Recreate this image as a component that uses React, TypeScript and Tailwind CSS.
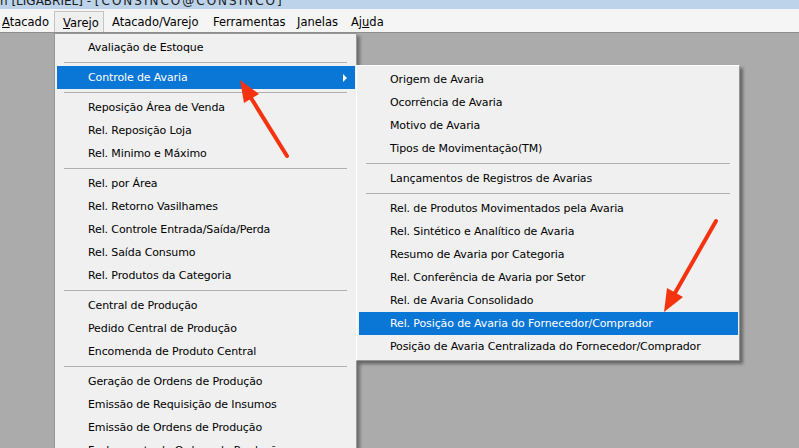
import React from "react";

type Item = { label: string; active?: boolean; sub?: boolean } | "-";

const VAREJO: Item[] = [
  { label: "Avaliação de Estoque" },
  "-",
  { label: "Controle de Avaria", active: true, sub: true },
  "-",
  { label: "Reposição Área de Venda" },
  { label: "Rel. Reposição Loja" },
  { label: "Rel. Minimo e Máximo" },
  "-",
  { label: "Rel. por Área" },
  { label: "Rel. Retorno Vasilhames" },
  { label: "Rel. Controle Entrada/Saída/Perda" },
  { label: "Rel. Saída Consumo" },
  { label: "Rel. Produtos da Categoria" },
  "-",
  { label: "Central de Produção" },
  { label: "Pedido Central de Produção" },
  { label: "Encomenda de Produto Central" },
  "-",
  { label: "Geração de Ordens de Produção" },
  { label: "Emissão de Requisição de Insumos" },
  { label: "Emissão de Ordens de Produção" },
  { label: "Fechamento de Ordens de Produção" },
];

const AVARIA: Item[] = [
  { label: "Origem de Avaria" },
  { label: "Ocorrência de Avaria" },
  { label: "Motivo de Avaria" },
  { label: "Tipos de Movimentação(TM)" },
  "-",
  { label: "Lançamentos de Registros de Avarias" },
  "-",
  { label: "Rel. de Produtos Movimentados pela Avaria" },
  { label: "Rel. Sintético e Analítico de Avaria" },
  { label: "Resumo de Avaria por Categoria" },
  { label: "Rel. Conferência de Avaria por Setor" },
  { label: "Rel. de Avaria Consolidado" },
  { label: "Rel. Posição de Avaria do Fornecedor/Comprador", active: true },
  { label: "Posição de Avaria Centralizada do Fornecedor/Comprador" },
];

const MenuList = ({ items }: { items: Item[] }) => (
  <div className="flex flex-col">
    {items.map((it, i) =>
      it === "-" ? (
        <div key={i} className="h-[7px] flex flex-col justify-center ml-[7px] mr-[8px]">
          <div className="h-px bg-[#b0b0b0]" />
        </div>
      ) : (
        <div
          key={i}
          className={`h-[23px] flex items-center pt-px pl-[31px] pr-2 whitespace-nowrap relative tracking-[-0.12px] ${
            it.active ? "bg-[#0a76d6] text-white" : "text-black"
          }`}
        >
          {it.label}
          {it.sub && (
            <span className="absolute right-[8px] top-[8px] w-0 h-0 border-y-[4px] border-y-transparent border-l-[4px] border-l-white" />
          )}
        </div>
      )
    )}
  </div>
);

const MENUBAR = [
  { label: "Atacado", u: 0, w: "w-[60px]" },
  { label: "Varejo", u: 0, w: "w-[50px]", open: true },
  { label: "Atacado/Varejo", u: -1, w: "w-[101px]" },
  { label: "Ferramentas", u: -1, w: "w-[84px]" },
  { label: "Janelas", u: 0, w: "w-[54px]" },
  { label: "Ajuda", u: 2, w: "w-[47px]" },
];

export default function App() {
  return (
    <div className="w-[799px] h-[448px] overflow-hidden relative flex flex-col bg-[#ababab] font-['DejaVu_Sans',Verdana,sans-serif] text-[11px]">
      {/* title bar, cut off at the top */}
      <div className="h-[9px] overflow-hidden bg-[#bcd3ea]">
        <div className="-mt-[6px] text-[12px] leading-[14px] text-[#1a1a1a] whitespace-nowrap">
          n [LIGABRIEL] - <span className="tracking-[2px]">[CONSINCO@CONSINCO]</span>
        </div>
      </div>

      {/* menu bar */}
      <div className="h-[24px] bg-[#f5f5f5] border-b border-[#8e8e8e] flex items-end">
        <div className="flex -ml-[6px] h-[21px]">
          {MENUBAR.map((m) => (
            <div
              key={m.label}
              className={`${m.w} flex items-center pt-[3px] pl-[8px] text-[11.5px] text-black whitespace-nowrap ${
                m.open ? "border border-[#c4c4c4] border-b-0 bg-[#f0f0f0] pl-[7px]" : ""
              }`}
            >
              {m.u < 0 ? (
                m.label
              ) : (
                <span>
                  {m.label.slice(0, m.u)}
                  <span className="underline">{m.label[m.u]}</span>
                  {m.label.slice(m.u + 1)}
                </span>
              )}
            </div>
          ))}
        </div>
      </div>

      {/* Varejo dropdown */}
      <div className="absolute left-[54px] top-[33px] w-[303px] bg-[#f0f0f0] border border-[#979797] p-[2px] pr-[1px] shadow-[3px_3px_3px_rgba(0,0,0,0.35)]">
        <MenuList items={VAREJO} />
      </div>

      {/* Controle de Avaria submenu */}
      <div className="absolute left-[356px] top-[65px] w-[384px] bg-[#f0f0f0] border border-[#979797] border-t-white border-l-white p-[2px] pr-[1px] shadow-[3px_3px_3px_rgba(0,0,0,0.4)]">
        <MenuList items={AVARIA} />
      </div>

      {/* annotation arrows */}
      <svg className="absolute inset-0 pointer-events-none" width="799" height="448">
        <line x1="287" y1="156" x2="251" y2="98" stroke="#f5330f" strokeWidth="4" strokeLinecap="round" />
        <polygon points="240,80 259,94 244,103" fill="#f5330f" />
        <line x1="716" y1="221" x2="675" y2="293" stroke="#f5330f" strokeWidth="4" strokeLinecap="round" />
        <polygon points="664,312 683,297 667,288" fill="#f5330f" />
      </svg>
    </div>
  );
}
